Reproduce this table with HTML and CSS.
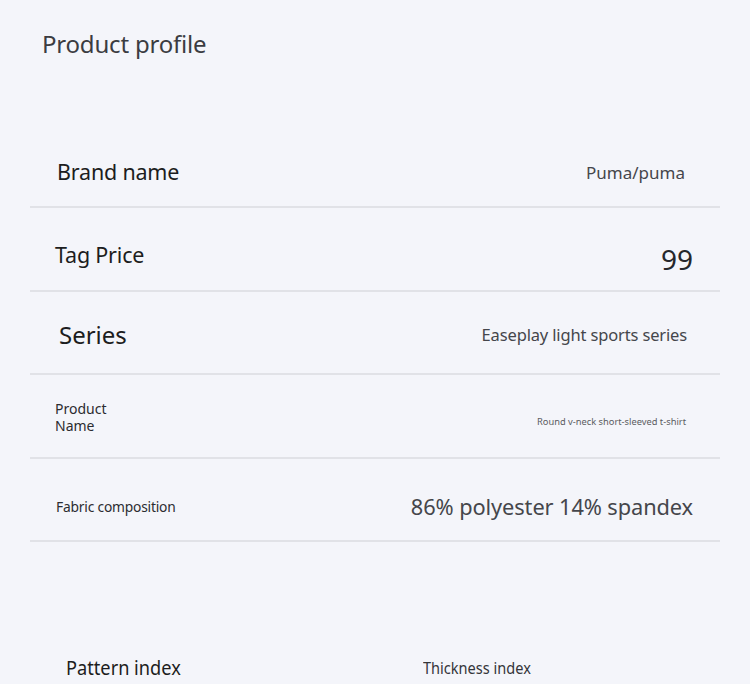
FILE: index.html
```html
<!DOCTYPE html>
<html lang="en">
<head>
  <meta charset="UTF-8">
  <meta name="viewport" content="width=device-width, initial-scale=1.0">
  <title>Product profile</title>
  <link rel="stylesheet" href="styles.css">
</head>
<body>
  <div class="page">
    <h1 class="title">Product profile</h1>

    <div class="spec-list">
      <div class="spec-row row-brand">
        <span class="label label-brand">Brand name</span>
        <span class="value value-brand">Puma/puma</span>
      </div>
      <div class="spec-row row-price">
        <span class="label label-price">Tag Price</span>
        <span class="value value-price">99</span>
      </div>
      <div class="spec-row row-series">
        <span class="label label-series">Series</span>
        <span class="value value-series">Easeplay light sports series</span>
      </div>
      <div class="spec-row row-name">
        <span class="label label-name">Product<br>Name</span>
        <span class="value value-name">Round v-neck short-sleeved t-shirt</span>
      </div>
      <div class="spec-row row-fabric">
        <span class="label label-fabric">Fabric composition</span>
        <span class="value value-fabric">86% polyester 14% spandex</span>
      </div>
    </div>

    <div class="index-grid">
      <div class="index-item index-pattern">Pattern index</div>
      <div class="index-item index-thickness">Thickness index</div>
    </div>
  </div>
</body>
</html>
```

FILE: styles.css
```css
body {
  font-family: "Noto Sans", "Open Sans", sans-serif;
  background-color: #f4f5fa;
  margin: 0;
  color: #1c1d20;
}
.page {
  padding: 0 30px;
  overflow: hidden;
  height: 684px;
}
.title {
  margin: 0;
  padding: 29px 0 0 12px;
  font-size: 24px;
  letter-spacing: -0.2px;
  line-height: 30px;
  font-weight: 400;
  color: #3b3c41;
}
.spec-list {
  margin-top: 65.5px;
}
.spec-row {
  display: flex;
  align-items: center;
  justify-content: space-between;
  box-sizing: border-box;
  height: 83.5px;
  padding: 0 27px 0 25px;
  border-bottom: 2px solid #e1e2e7;
}
.label {
  line-height: 1.2;
}
.value {
  line-height: 1.2;
  color: #45464b;
}
.label-brand { font-size: 21.5px; letter-spacing: -0.2px; margin: 14px 0 0 2px; }
.value-brand { font-size: 17px; margin: 16px 8px 0 0; }

.label-price { font-size: 21.5px; letter-spacing: -0.2px; margin-top: 12px; }
.value-price { font-size: 28px; margin-top: 22px; color: #26272b; }

.label-series { font-size: 24px; margin: 6px 0 0 4px; }
.value-series { font-size: 16.5px; letter-spacing: -0.15px; margin: 6px 6px 0 0; }

.label-name { font-size: 14px; line-height: 17.5px; margin-top: 3px; color: #2b2c30; }
.value-name { font-size: 9.3px; margin: 12px 7px 0 0; color: #5a5b60; }

.label-fabric { font-size: 13.8px; letter-spacing: -0.2px; margin: 16px 0 0 1px; color: #2b2c30; }
.value-fabric { font-size: 21.8px; letter-spacing: -0.1px; margin-top: 16px; }

.index-grid {
  display: grid;
  grid-template-columns: 357px 1fr;
  margin-top: 112px;
  padding-left: 36px;
}
.index-item {
  transform-origin: left center;
  transform: scaleX(0.91);
  color: #1c1d20;
  white-space: nowrap;
}
.index-pattern {
  font-size: 20px;
}
.index-thickness {
  font-size: 16px;
  margin-top: 3px;
  color: #35363a;
}
```
